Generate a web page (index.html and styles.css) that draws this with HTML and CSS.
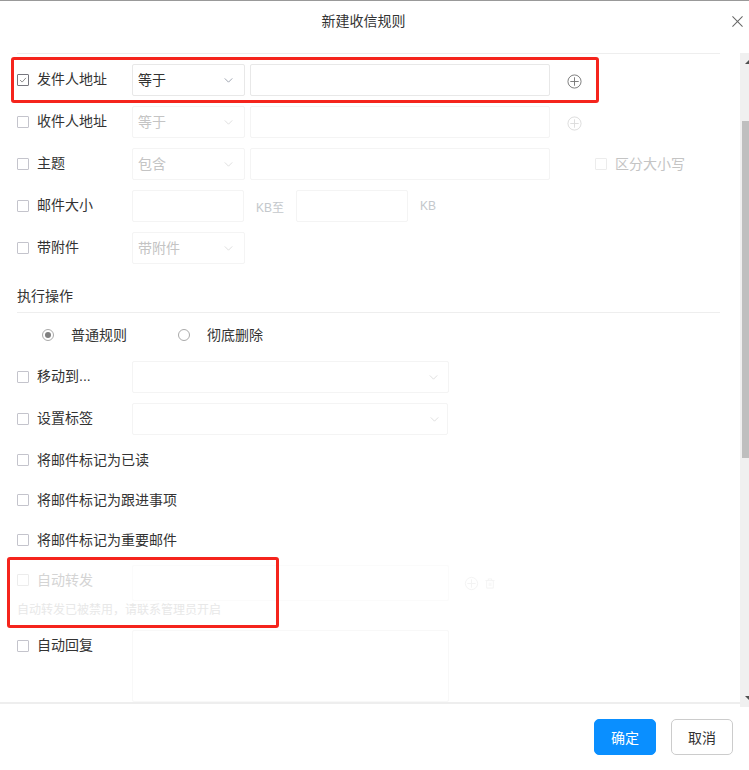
FILE: index.html
```html
<!DOCTYPE html>
<html lang="zh-CN">
<head>
<meta charset="utf-8">
<title>新建收信规则</title>
<link rel="stylesheet" href="styles.css">
</head>
<body>
<div class="dialog">
  <header class="head">
    <h1 class="title">新建收信规则</h1>
    <svg class="close" viewBox="0 0 12 12"><path d="M.5.5l11 11M11.500.5l-11 11"/></svg>
  </header>
  <main class="body">
    <div class="content">
      <div class="conditions">
        <div class="row">
          <span class="cb checked"><svg viewBox="0 0 12 12"><path d="M2.500 6l2.500 2.500 4.500-5"/></svg></span>
          <span class="label">发件人地址</span>
          <span class="select"><span>等于</span><svg class="chev" viewBox="0 0 10 6"><path d="M.5.500l4.500 4.500 4.500-4.500"/></svg></span>
          <span class="input wide"></span>
          <svg class="plus" viewBox="0 0 16 16"><circle cx="8" cy="8" r="7"/><path d="M8 3.500v9M3.500 8h9"/></svg>
        </div>
        <div class="row off">
          <span class="cb"></span>
          <span class="label">收件人地址</span>
          <span class="select"><span>等于</span><svg class="chev" viewBox="0 0 10 6"><path d="M.5.500l4.500 4.500 4.500-4.500"/></svg></span>
          <span class="input wide"></span>
          <svg class="plus" viewBox="0 0 16 16"><circle cx="8" cy="8" r="7"/><path d="M8 3.500v9M3.500 8h9"/></svg>
        </div>
        <div class="row off">
          <span class="cb"></span>
          <span class="label">主题</span>
          <span class="select"><span>包含</span><svg class="chev" viewBox="0 0 10 6"><path d="M.5.500l4.500 4.500 4.500-4.500"/></svg></span>
          <span class="input wide"></span>
          <span class="case"><span class="cb faint"></span><span class="case-text">区分大小写</span></span>
        </div>
        <div class="row off">
          <span class="cb"></span>
          <span class="label">邮件大小</span>
          <span class="input size"></span>
          <span class="unit">KB至</span>
          <span class="input size"></span>
          <span class="unit">KB</span>
        </div>
        <div class="row off">
          <span class="cb"></span>
          <span class="label">带附件</span>
          <span class="select"><span>带附件</span><svg class="chev" viewBox="0 0 10 6"><path d="M.5.500l4.500 4.500 4.500-4.500"/></svg></span>
        </div>
      </div>
      <h2 class="section">执行操作</h2>
      <div class="radios">
        <span class="radio-item"><span class="radio on"></span><span class="radio-text">普通规则</span></span>
        <span class="radio-item"><span class="radio"></span><span class="radio-text">彻底删除</span></span>
      </div>
      <div class="actions">
        <div class="row off">
          <span class="cb"></span>
          <span class="label">移动到...</span>
          <span class="select long"><svg class="chev" viewBox="0 0 10 6"><path d="M.5.500l4.500 4.500 4.500-4.500"/></svg></span>
        </div>
        <div class="row off">
          <span class="cb"></span>
          <span class="label">设置标签</span>
          <span class="select long tag"><svg class="chev" viewBox="0 0 10 6"><path d="M.5.500l4.500 4.500 4.500-4.500"/></svg></span>
        </div>
      </div>
      <div class="plain first"><span class="cb"></span><span class="label">将邮件标记为已读</span></div>
      <div class="plain"><span class="cb"></span><span class="label">将邮件标记为跟进事项</span></div>
      <div class="plain"><span class="cb"></span><span class="label">将邮件标记为重要邮件</span></div>
      <div class="forward">
        <span class="cb faint"></span>
        <span class="label">自动转发</span>
        <span class="input tall"></span>
        <svg class="plus faint-icon" viewBox="0 0 16 16"><circle cx="8" cy="8" r="6.500"/><path d="M8 3.500v9M3.500 8h9"/></svg>
        <svg class="trash" viewBox="0 0 12 13"><path d="M.5 3h11M4 3V1h4v2M2 3v9h8V3M5 5.500v4M7 5.500v4"/></svg>
      </div>
      <p class="hint">自动转发已被禁用，请联系管理员开启</p>
      <div class="reply">
        <span class="cb"></span>
        <span class="label">自动回复</span>
        <span class="textarea"></span>
      </div>
    </div>
    <div class="scrollbar">
      <span class="arrow up"></span>
      <span class="thumb"></span>
      <span class="arrow down"></span>
    </div>
  </main>
  <footer class="foot">
    <button class="btn primary">确定</button>
    <button class="btn">取消</button>
  </footer>
  <div class="mark mark-one"></div>
  <div class="mark mark-two"></div>
</div>
</body>
</html>
```
FILE: styles.css
```css
* { box-sizing: border-box; }
html, body { margin: 0; height: 100%; }
body {
  font-family: "Liberation Sans", "Noto Sans CJK SC", sans-serif;
  font-size: 14px;
  color: #333;
  background: #fff;
  overflow: hidden;
}
.dialog {
  position: relative;
  width: 749px;
  height: 770px;
  border-top: 1px solid #999;
  display: flex;
  flex-direction: column;
}
.head {
  height: 52px;
  flex: none;
  position: relative;
  display: flex;
  justify-content: center;
  padding: 10px 22px 0 0;
}
.title { margin: 0; font-size: 14px; font-weight: 400; line-height: 20px; color: #333; }
.close {
  position: absolute;
  right: 6px;
  top: 15px;
  width: 11px;
  height: 11px;
  fill: none;
  stroke: #666;
  stroke-width: 1.1;
}
.body {
  height: 651px;
  flex: none;
  display: flex;
  border-bottom: 2px solid #eee;
}
.content { width: 740px; flex: none; padding: 0 20px 0 17px; }
.scrollbar {
  width: 9px;
  height: 654px;
  flex: none;
  background: #f0f0f0;
  position: relative;
}
.thumb { position: absolute; top: 68px; left: 2px; right: 0; height: 337px; background: #bfbfbf; }
.arrow { position: absolute; right: 0; width: 0; height: 0; border-style: solid; }
.arrow.up { top: 7px; border-width: 0 0 4px 4px; border-color: transparent transparent #505050 transparent; }
.arrow.down { bottom: 7px; border-width: 4px 0 0 4px; border-color: #505050 transparent transparent transparent; }
.conditions {
  border-top: 1px solid #eee;
  padding-top: 10px;
  display: flex;
  flex-direction: column;
  gap: 10px;
}
.row { height: 32px; display: flex; align-items: center; }
.cb {
  width: 12px;
  height: 12px;
  flex: none;
  border: 1px solid #c4c4cc;
  border-radius: 1px;
  background: #fff;
  display: flex;
}
.cb svg { width: 10px; height: 10px; fill: none; stroke: #777; stroke-width: 1; }
.cb.checked { border-color: #77777f; }
.cb.faint { border-color: #ececec; }
.label { margin-left: 8px; width: 95px; flex: none; color: #333; line-height: 20px; white-space: nowrap; }
.row .label, .select > span, .case-text, .radio-text { margin-top: -2px; }
.select, .input, .textarea {
  display: flex;
  align-items: center;
  border: 1px solid #e8e8e8;
  border-radius: 2px;
  height: 32px;
  background: #fff;
}
.select {
  width: 113px;
  flex: none;
  padding: 0 11px 0 5px;
  justify-content: space-between;
  color: #333;
}
.select.long { width: 317px; justify-content: flex-end; padding-right: 10px; }
.select.long.tag { width: 316px; padding-right: 8px; }
.chev { width: 9px; height: 5px; fill: none; stroke: #8b93a1; stroke-width: 1; }
.input.wide { width: 300px; margin-left: 5px; flex: none; }
.plus { width: 15px; height: 15px; margin: 2px 0 0 17px; fill: none; stroke: #777; stroke-width: 1; flex: none; }
.off .select, .off .input, .off .textarea { border-color: #f4f4f4; color: #c4c4c4; }
.off .chev { stroke: #d8d8d8; }
.off .plus { stroke: #dcdcdc; }
.size.input { width: 112px; flex: none; }
.unit { color: #c4c8cc; width: 52px; flex: none; padding-left: 12px; font-size: 12px; }
.case { display: flex; align-items: center; margin-left: 45px; color: #c4c4c4; gap: 8px; }
.section {
  margin: 21px 0 0;
  height: 28px;
  padding-top: 2px;
  font-size: 14px;
  font-weight: 400;
  line-height: 18px;
  color: #333;
  border-bottom: 1px solid #eee;
}
.radios { display: flex; height: 48px; align-items: center; padding: 0 0 4px 25px; }
.radio-item { display: flex; align-items: center; gap: 17px; width: 136px; color: #333; font-size: 14px; }
.radio {
  width: 12px;
  height: 12px;
  border: 1px solid #aaa;
  border-radius: 50%;
  background: #fff;
  display: flex;
  align-items: center;
  justify-content: center;
  flex: none;
}
.radio.on::after { content: ""; width: 6px; height: 6px; border-radius: 50%; background: #808080; }
.actions { display: flex; flex-direction: column; gap: 10px; }
.plain { display: flex; align-items: center; height: 20px; margin-top: 20px; }
.plain.first { margin-top: 15px; }
.plain .label { width: auto; }
.forward { display: flex; align-items: center; height: 36px; margin-top: 15px; color: #ccc; }
.forward .cb { align-self: flex-start; margin-top: 9px; }
.forward .label { align-self: flex-start; margin-top: 5px; color: #d4d4d4; }
.input.tall { height: 36px; width: 317px; border-color: #fbfbfb; flex: none; }
.plus.faint-icon { margin: 0 0 0 15px; stroke: #f2f2f2; }
.trash { width: 10px; height: 11px; margin-left: 6px; fill: none; stroke: #f2f2f2; stroke-width: 1; }
.hint { margin: 0; height: 18px; font-size: 12px; line-height: 18px; color: #e8e8e8; }
.reply { display: flex; align-items: flex-start; margin-top: 11px; height: 72px; }
.reply .cb { margin-top: 10px; }
.reply .label { margin-top: 5px; }
.textarea { width: 317px; height: 72px; border: 1px solid #f8f8f8; flex: none; }
.foot {
  flex: 1;
  display: flex;
  justify-content: flex-end;
  align-items: flex-start;
  gap: 15px;
  padding: 15px 16px 0 0;
}
.btn {
  width: 62px;
  height: 36px;
  border: 1px solid #ccc;
  border-radius: 5px;
  background: #fff;
  color: #333;
  font: inherit;
  padding: 0;
}
.btn.primary { background: #0a8fff; border-color: #0a8fff; color: #fff; }
.mark {
  position: absolute;
  border: 3px solid #f5241c;
  border-radius: 3px;
  pointer-events: none;
}
.mark-one { left: 11px; top: 56px; width: 588px; height: 46px; }
.mark-two { left: 7px; top: 556px; width: 272px; height: 71px; }
```
